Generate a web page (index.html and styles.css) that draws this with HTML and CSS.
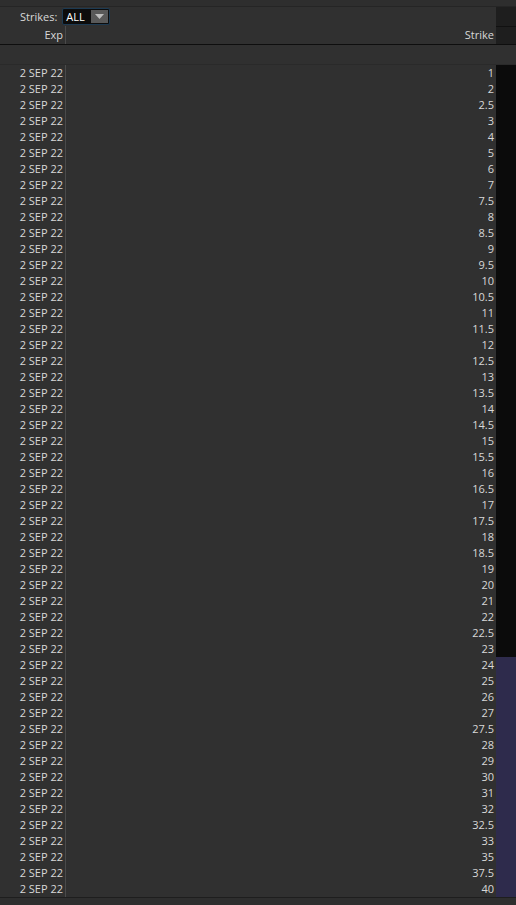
FILE: index.html
```html
<!DOCTYPE html>
<html>
<head>
<meta charset="utf-8">
<link rel="stylesheet" href="styles.css">
</head>
<body>
<div class="page">
  <div class="topstrip"></div>
  <div class="toolbar">
    <div class="tb-main">
      <span class="tb-label">Strikes:</span>
      <div class="select">
        <span class="select-value">ALL</span>
        <span class="select-btn"><svg width="9" height="5" viewBox="0 0 9 5"><path d="M0 0h9L4.5 5z" fill="#bdbdbd"/></svg></span>
      </div>
    </div>
    <div class="side side-head"></div>
  </div>
  <div class="header">
    <div class="cell exp">Exp</div>
    <div class="cell strike">Strike</div>
    <div class="side side-head side-top"></div>
  </div>
  <div class="empty-row"></div>
  <div class="rows">
    <div class="row"><div class="cell exp">2 SEP 22</div><div class="cell strike">1</div><div class="side side-itm"></div></div>
    <div class="row"><div class="cell exp">2 SEP 22</div><div class="cell strike">2</div><div class="side side-itm"></div></div>
    <div class="row"><div class="cell exp">2 SEP 22</div><div class="cell strike">2.5</div><div class="side side-itm"></div></div>
    <div class="row"><div class="cell exp">2 SEP 22</div><div class="cell strike">3</div><div class="side side-itm"></div></div>
    <div class="row"><div class="cell exp">2 SEP 22</div><div class="cell strike">4</div><div class="side side-itm"></div></div>
    <div class="row"><div class="cell exp">2 SEP 22</div><div class="cell strike">5</div><div class="side side-itm"></div></div>
    <div class="row"><div class="cell exp">2 SEP 22</div><div class="cell strike">6</div><div class="side side-itm"></div></div>
    <div class="row"><div class="cell exp">2 SEP 22</div><div class="cell strike">7</div><div class="side side-itm"></div></div>
    <div class="row"><div class="cell exp">2 SEP 22</div><div class="cell strike">7.5</div><div class="side side-itm"></div></div>
    <div class="row"><div class="cell exp">2 SEP 22</div><div class="cell strike">8</div><div class="side side-itm"></div></div>
    <div class="row"><div class="cell exp">2 SEP 22</div><div class="cell strike">8.5</div><div class="side side-itm"></div></div>
    <div class="row"><div class="cell exp">2 SEP 22</div><div class="cell strike">9</div><div class="side side-itm"></div></div>
    <div class="row"><div class="cell exp">2 SEP 22</div><div class="cell strike">9.5</div><div class="side side-itm"></div></div>
    <div class="row"><div class="cell exp">2 SEP 22</div><div class="cell strike">10</div><div class="side side-itm"></div></div>
    <div class="row"><div class="cell exp">2 SEP 22</div><div class="cell strike">10.5</div><div class="side side-itm"></div></div>
    <div class="row"><div class="cell exp">2 SEP 22</div><div class="cell strike">11</div><div class="side side-itm"></div></div>
    <div class="row"><div class="cell exp">2 SEP 22</div><div class="cell strike">11.5</div><div class="side side-itm"></div></div>
    <div class="row"><div class="cell exp">2 SEP 22</div><div class="cell strike">12</div><div class="side side-itm"></div></div>
    <div class="row"><div class="cell exp">2 SEP 22</div><div class="cell strike">12.5</div><div class="side side-itm"></div></div>
    <div class="row"><div class="cell exp">2 SEP 22</div><div class="cell strike">13</div><div class="side side-itm"></div></div>
    <div class="row"><div class="cell exp">2 SEP 22</div><div class="cell strike">13.5</div><div class="side side-itm"></div></div>
    <div class="row"><div class="cell exp">2 SEP 22</div><div class="cell strike">14</div><div class="side side-itm"></div></div>
    <div class="row"><div class="cell exp">2 SEP 22</div><div class="cell strike">14.5</div><div class="side side-itm"></div></div>
    <div class="row"><div class="cell exp">2 SEP 22</div><div class="cell strike">15</div><div class="side side-itm"></div></div>
    <div class="row"><div class="cell exp">2 SEP 22</div><div class="cell strike">15.5</div><div class="side side-itm"></div></div>
    <div class="row"><div class="cell exp">2 SEP 22</div><div class="cell strike">16</div><div class="side side-itm"></div></div>
    <div class="row"><div class="cell exp">2 SEP 22</div><div class="cell strike">16.5</div><div class="side side-itm"></div></div>
    <div class="row"><div class="cell exp">2 SEP 22</div><div class="cell strike">17</div><div class="side side-itm"></div></div>
    <div class="row"><div class="cell exp">2 SEP 22</div><div class="cell strike">17.5</div><div class="side side-itm"></div></div>
    <div class="row"><div class="cell exp">2 SEP 22</div><div class="cell strike">18</div><div class="side side-itm"></div></div>
    <div class="row"><div class="cell exp">2 SEP 22</div><div class="cell strike">18.5</div><div class="side side-itm"></div></div>
    <div class="row"><div class="cell exp">2 SEP 22</div><div class="cell strike">19</div><div class="side side-itm"></div></div>
    <div class="row"><div class="cell exp">2 SEP 22</div><div class="cell strike">20</div><div class="side side-itm"></div></div>
    <div class="row"><div class="cell exp">2 SEP 22</div><div class="cell strike">21</div><div class="side side-itm"></div></div>
    <div class="row"><div class="cell exp">2 SEP 22</div><div class="cell strike">22</div><div class="side side-itm"></div></div>
    <div class="row"><div class="cell exp">2 SEP 22</div><div class="cell strike">22.5</div><div class="side side-itm"></div></div>
    <div class="row"><div class="cell exp">2 SEP 22</div><div class="cell strike">23</div><div class="side side-itm"></div></div>
    <div class="row"><div class="cell exp">2 SEP 22</div><div class="cell strike">24</div><div class="side side-otm"></div></div>
    <div class="row"><div class="cell exp">2 SEP 22</div><div class="cell strike">25</div><div class="side side-otm"></div></div>
    <div class="row"><div class="cell exp">2 SEP 22</div><div class="cell strike">26</div><div class="side side-otm"></div></div>
    <div class="row"><div class="cell exp">2 SEP 22</div><div class="cell strike">27</div><div class="side side-otm"></div></div>
    <div class="row"><div class="cell exp">2 SEP 22</div><div class="cell strike">27.5</div><div class="side side-otm"></div></div>
    <div class="row"><div class="cell exp">2 SEP 22</div><div class="cell strike">28</div><div class="side side-otm"></div></div>
    <div class="row"><div class="cell exp">2 SEP 22</div><div class="cell strike">29</div><div class="side side-otm"></div></div>
    <div class="row"><div class="cell exp">2 SEP 22</div><div class="cell strike">30</div><div class="side side-otm"></div></div>
    <div class="row"><div class="cell exp">2 SEP 22</div><div class="cell strike">31</div><div class="side side-otm"></div></div>
    <div class="row"><div class="cell exp">2 SEP 22</div><div class="cell strike">32</div><div class="side side-otm"></div></div>
    <div class="row"><div class="cell exp">2 SEP 22</div><div class="cell strike">32.5</div><div class="side side-otm"></div></div>
    <div class="row"><div class="cell exp">2 SEP 22</div><div class="cell strike">33</div><div class="side side-otm"></div></div>
    <div class="row"><div class="cell exp">2 SEP 22</div><div class="cell strike">35</div><div class="side side-otm"></div></div>
    <div class="row"><div class="cell exp">2 SEP 22</div><div class="cell strike">37.5</div><div class="side side-otm"></div></div>
    <div class="row"><div class="cell exp">2 SEP 22</div><div class="cell strike">40</div><div class="side side-otm"></div></div>
  </div>
  <div class="bottomstrip"></div>
</div>
</body>
</html>
```
FILE: styles.css
```css
html, body {
  margin: 0;
  padding: 0;
  background: #303030;
}
.page {
  width: 516px;
  height: 905px;
  overflow: hidden;
  font-family: "Open Sans", "Noto Sans", sans-serif;
  font-size: 11px;
  color: #d8d8d8;
  background: #303030;
}
.topstrip {
  height: 6px;
  background: #2e2e2e;
  border-bottom: 1px solid #252525;
}
.toolbar {
  display: grid;
  grid-template-columns: 1fr 20px;
  height: 19px;
}
.tb-main {
  display: flex;
  align-items: center;
  padding-left: 20px;
  gap: 5px;
}
.tb-label {
  line-height: 16px;
}
.select {
  box-sizing: border-box;
  width: 48px;
  height: 17px;
  border: 1px solid #1d3a52;
  border-radius: 2px;
  background: #0c0c0c;
  display: flex;
  align-items: center;
  justify-content: space-between;
  padding: 0 1px 0 3px;
  color: #ffffff;
  font-size: 11px;
}
.select-btn {
  width: 17px;
  height: 13px;
  background: #595959;
  display: flex;
  align-items: center;
  justify-content: center;
}
.side-head {
  background: #1e1e1e;
}
.side-top {
  border-top: 1px solid #111;
}
.header {
  display: grid;
  grid-template-columns: 66px 1fr 20px;
  height: 18px;
  border-bottom: 1px solid #0e0e0e;
}
.cell {
  line-height: 16px;
  text-align: right;
  white-space: nowrap;
}
.header .cell {
  line-height: 18px;
}
.exp {
  padding-right: 2px;
  border-right: 1px solid #4a4a4a;
}
.strike {
  padding-right: 2px;
}
.empty-row {
  height: 20px;
  border-bottom: 1px solid #2a2a2a;
  box-sizing: border-box;
}
.rows {
  display: flex;
  flex-direction: column;
}
.row {
  display: grid;
  grid-template-columns: 66px 1fr 20px;
  height: 16px;
}
.side-itm {
  background: #0b0b0b;
}
.side-otm {
  background: #2e2b4c;
}
.bottomstrip {
  border-top: 1px solid #1e1e1e;
  height: 8px;
  background: #2e2e2e;
}
```
